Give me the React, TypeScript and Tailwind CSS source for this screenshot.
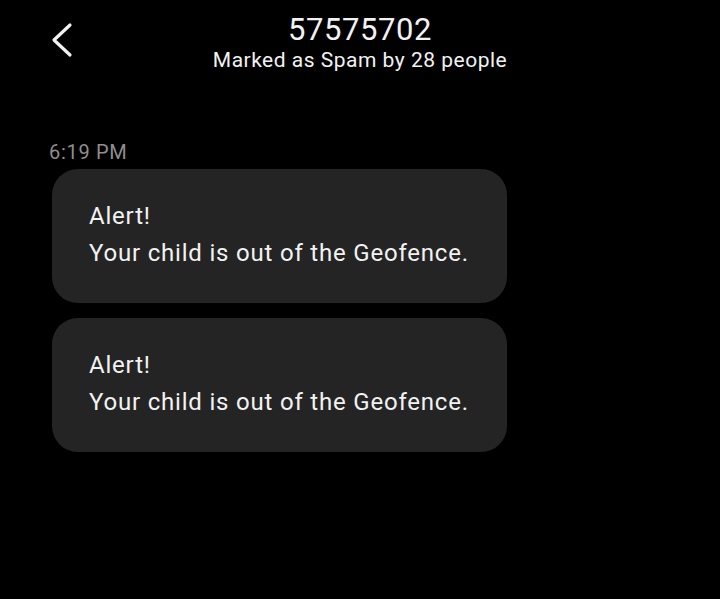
import React from "react";

function Bubble() {
  return (
    <div className="ml-[52px] w-[455px] rounded-[26px] bg-[#242424] pl-[37px] pt-[29px] pb-[31px] text-[24px] leading-[37px] tracking-[0.8px] text-[#f2f2f2]">
      <div>Alert!</div>
      <div>Your child is out of the Geofence.</div>
    </div>
  );
}

export default function App() {
  return (
    <div
      className="relative h-[599px] w-[720px] overflow-hidden bg-black"
      style={{ fontFamily: "Roboto, 'Noto Sans', sans-serif" }}
    >
      <div className="relative flex flex-col items-center pt-[12px]">
        <div className="text-[31px] leading-[36px] tracking-[0.6px] text-[#f2f2f2]">57575702</div>
        <div className="text-[21px] leading-[24px] tracking-[0.5px] text-[#f2f2f2]">Marked as Spam by 28 people</div>
        <svg
          className="absolute left-[44px] top-[18px]"
          width="36"
          height="44"
          viewBox="0 0 36 44"
        >
          <path
            d="M26 7 L10 22 L26 37"
            fill="none"
            stroke="#f2f2f2"
            strokeWidth="3.2"
            strokeLinecap="round"
            strokeLinejoin="round"
          />
        </svg>
      </div>
      <div className="mt-[70px] pl-[49px] text-[20px] leading-[20px] tracking-[0.7px] text-[#8e8e8e]">6:19 PM</div>
      <div className="mt-[7px] flex flex-col gap-[15px]">
        <Bubble />
        <Bubble />
      </div>
    </div>
  );
}
